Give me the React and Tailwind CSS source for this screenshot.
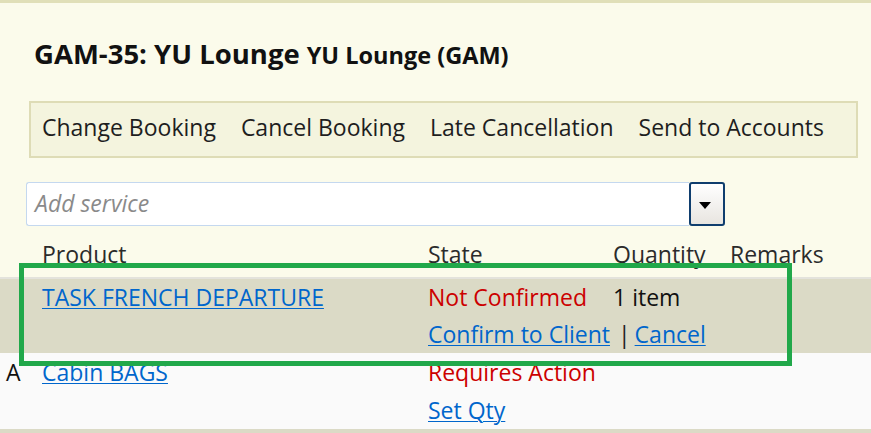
import React from "react";

const link = "text-[#0066cc] underline decoration-1 underline-offset-2";

function Toolbar() {
  const items = ["Change Booking", "Cancel Booking", "Late Cancellation", "Send to Accounts"];
  return (
    <div className="ml-[29px] mt-[27px] flex h-[57px] w-[829px] items-start gap-[25px] border-2 border-[#dedcb6] bg-[#f4f4de] pl-[11px] pt-[5px] text-[23px] leading-[38px] text-[#1e1e1e]">
      {items.map((item) => (
        <span key={item} className="whitespace-nowrap">
          {item}
        </span>
      ))}
    </div>
  );
}

function AddService() {
  return (
    <div className="ml-[26px] mt-[24px] flex h-[44px] w-[699px]">
      <div className="flex flex-1 items-start rounded-l-[3px] border border-r-0 border-[#c4d8ef] bg-white pl-[8px] pt-[1px]">
        <span className="text-[23px] italic leading-[38px] text-[#8a8a8a]">Add service</span>
      </div>
      <div className="flex w-[36px] items-center justify-center rounded-[3px] border-2 border-[#0f3e6e] bg-gradient-to-b from-white to-[#e8e5e0]">
        <svg width="12" height="8" viewBox="0 0 12 8" className="-ml-[4px] mt-[3px]">
          <polygon points="0,0 12,0 6,7" fill="#000" />
        </svg>
      </div>
    </div>
  );
}

export default function App() {
  return (
    <div
      className="relative h-[433px] w-[871px] overflow-hidden bg-[#fbfbeb] text-[#1e1e1e]"
      style={{ fontFamily: '"Open Sans", "Noto Sans", sans-serif' }}
    >
      <div className="h-[3px] bg-[#e0dfb8]" />

      {/* Title */}
      <div className="mt-[32px] flex items-baseline pl-[34px] leading-[38px]">
        <span className="text-[27.5px] font-bold text-[#111]">GAM-35: YU Lounge</span>
        <span className="ml-[7px] text-[23.5px] font-bold text-[#111]">YU Lounge (GAM)</span>
      </div>

      <Toolbar />
      <AddService />

      {/* Services table */}
      <div className="mt-[9px] text-[23px]">
        <div className="grid h-[42px] grid-cols-[42px_386px_185px_117px_1fr] leading-[38px] text-[#2b2b2b]">
          <div />
          <div>Product</div>
          <div>State</div>
          <div>Quantity</div>
          <div>Remarks</div>
        </div>

        <div className="grid grid-cols-[42px_386px_185px_117px_1fr] border-t-2 border-[#e3e3dc] bg-[#dbdac6] leading-[37px]">
          <div />
          <div>
            <a className={link}>TASK FRENCH DEPARTURE</a>
          </div>
          <div className="whitespace-nowrap">
            <div className="text-[#cc0000]">Not Confirmed</div>
            <div>
              <a className={link}>Confirm to Client</a>
              <span className="ml-[8px] mr-[4px] text-[#222]">|</span>
              <a className={link}>Cancel</a>
            </div>
          </div>
          <div className="text-[#111]">1 item</div>
          <div />
        </div>

        <div className="grid h-[76px] grid-cols-[42px_386px_185px_117px_1fr] bg-[#fafafa] leading-[38px]">
          <div className="pl-[6px] text-[#111]">A</div>
          <div>
            <a className={link}>Cabin BAGS</a>
          </div>
          <div className="whitespace-nowrap">
            <div className="text-[#cc0000]">Requires Action</div>
            <div>
              <a className={link}>Set Qty</a>
            </div>
          </div>
          <div />
          <div />
        </div>

        <div className="h-[10px] bg-[#dbdac6]" />
      </div>

      {/* highlight annotation */}
      <div className="pointer-events-none absolute left-[19px] top-[263px] h-[103px] w-[773px] border-[5px] border-[#21a84a]" />
    </div>
  );
}
